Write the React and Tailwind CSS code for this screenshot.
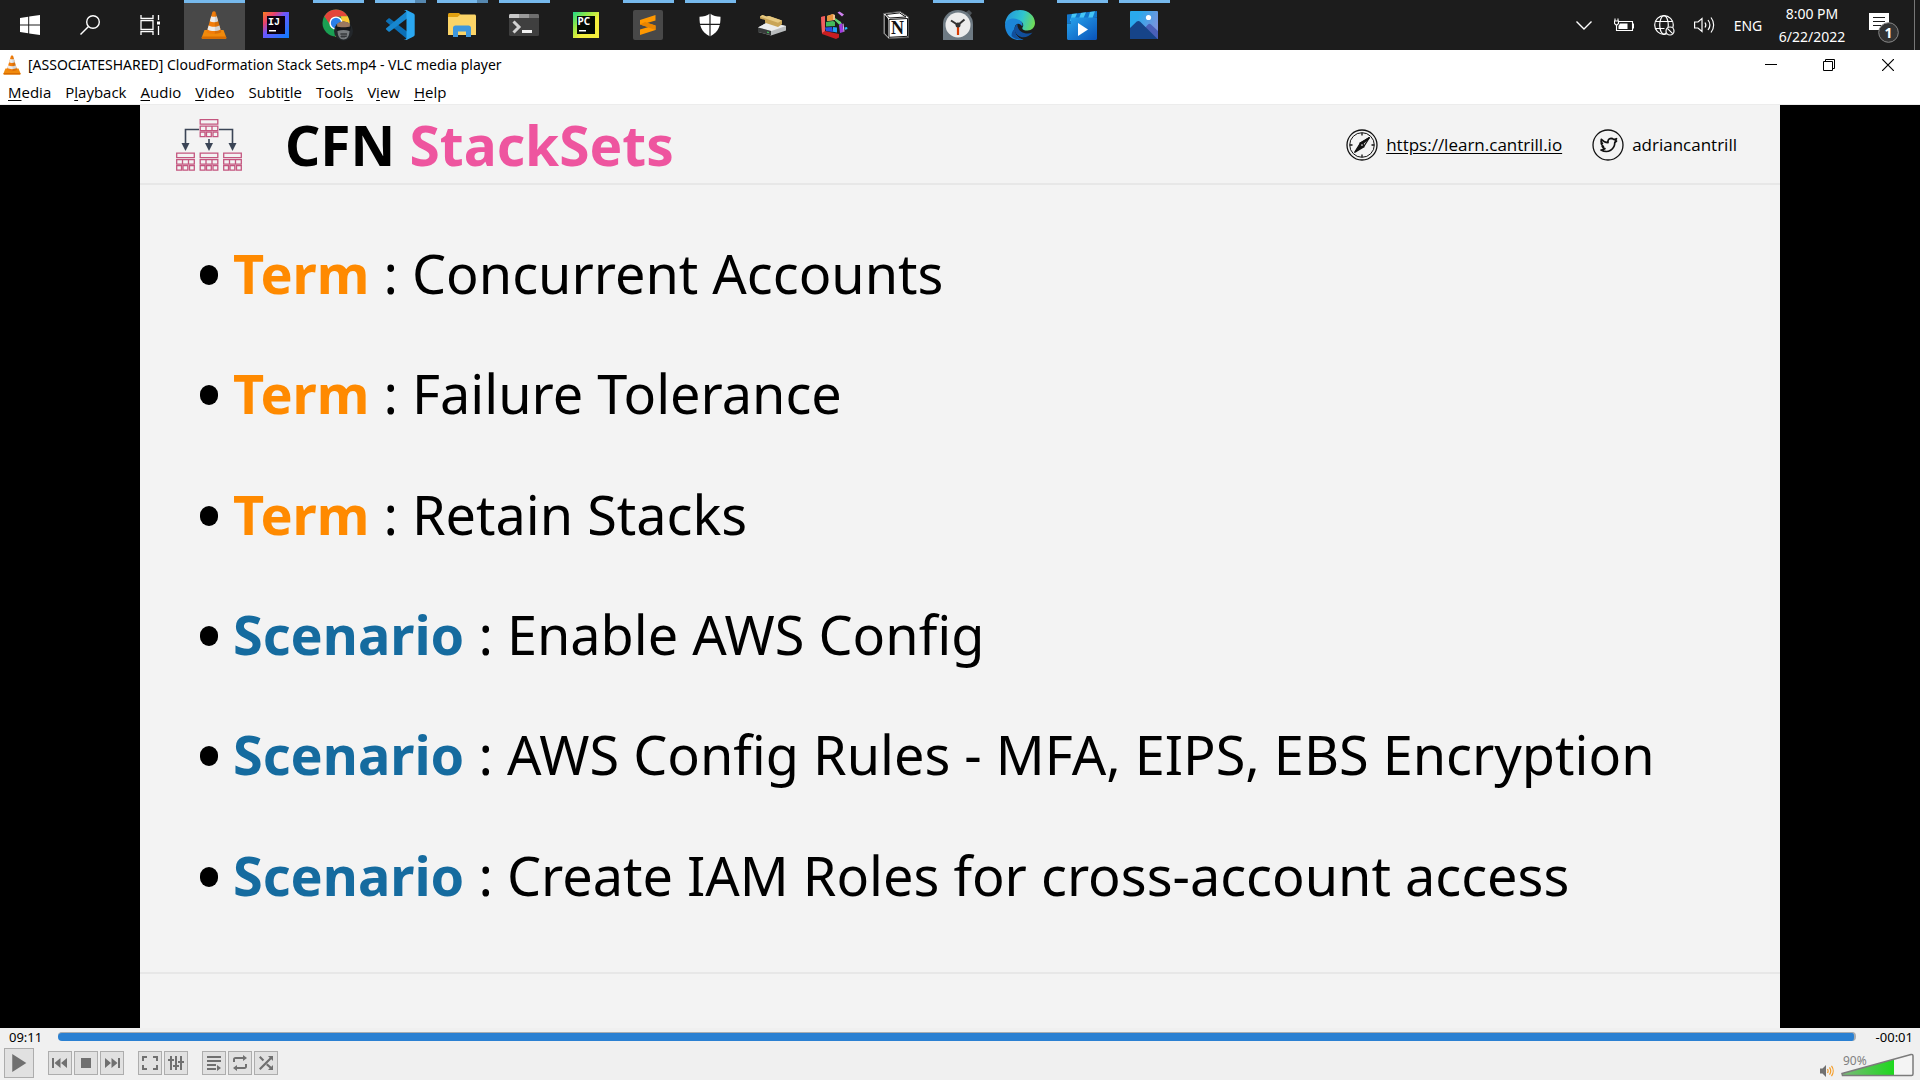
import React from "react";

function Cone({ className }) {
  return (
    <svg viewBox="0 0 26 28" className={className} aria-hidden="true">
      <path d="M3.5 19h19l2.8 7.4c.2.8-.2 1.4-1 1.4H1.7c-.8 0-1.2-.6-1-1.4z" fill="#f08a0c" />
      <path d="M1 25.5h24l.3 1.2c0 .7-.4 1.1-1 1.1H1.7c-.6 0-1-.4-1-1.1z" fill="#d96c00" />
      <path d="M11.4.9c.7-.8 2.5-.8 3.2 0L20.3 21c-2.5 2.6-12.1 2.6-14.6 0z" fill="#f27d0a" />
      <path d="M10.2 5.2c1.6.8 4 .8 5.6 0l1.4 5c-2.3 1.3-6.1 1.3-8.4 0z" fill="#ececec" />
      <path d="M7.6 14.4c2.8 1.7 8 1.7 10.8 0l1.1 4c-3 2.2-10 2.2-13 0z" fill="#ececec" />
      <path d="M13.8 1v21.8c3-.1 5.500-.8 6.500-1.800L14.600 1z" fill="#000" opacity=".1" />
    </svg>
  );
}

const jb = "bold 10px 'Liberation Mono', monospace";

const Windows = () => (
  <svg viewBox="0 0 20 20" className="size-5" fill="#fff" aria-hidden="true">
    <path d="M0 3l8.200-1.200V9.500H0zM9.200 1.600L20 0v9.500H9.200zM0 10.500h8.200v7.700L0 17zM9.200 10.500H20V20L9.200 18.400z" />
  </svg>
);
const Search = () => (
  <svg viewBox="0 0 20 20" className="size-5" fill="none" stroke="#fff" strokeWidth="1.400" aria-hidden="true">
    <circle cx="13" cy="7" r="6.300" />
    <path d="M8.500 11.500L.5 19.500" />
  </svg>
);
const TaskView = () => (
  <svg viewBox="0 0 21 20" className="h-5 w-[21px]" fill="none" stroke="#fff" strokeWidth="1.300" aria-hidden="true">
    <path d="M1 0v3.500h12V0M1 20v-3.500h12V20M1 5.700h12v8.600H1zM18.500 0v5M18.500 20v-9" />
    <path d="M17 6.500h3v3h-3z" fill="#fff" stroke="none" />
  </svg>
);
const IntelliJ = () => (
  <svg viewBox="0 0 26 26" className="size-[26px]" aria-hidden="true">
    <defs>
      <linearGradient id="ij" x1="0" y1="0" x2="1" y2="1">
        <stop offset="0" stopColor="#fc801d" />
        <stop offset=".25" stopColor="#e8416f" />
        <stop offset=".45" stopColor="#6b57ff" />
        <stop offset="1" stopColor="#087cfa" />
      </linearGradient>
    </defs>
    <path d="M0 0h26v26H0z" fill="url(#ij)" />
    <path d="M4 4h18v18H4z" fill="#0b0010" />
    <text x="5" y="13" fill="#fff" style={{ font: jb }}>IJ</text>
    <path d="M6 18h7v1.500H6z" fill="#fff" />
  </svg>
);
const Chrome = () => (
  <svg viewBox="0 0 32 32" className="size-8" aria-hidden="true">
    <circle cx="14" cy="14" r="13.500" fill="#1a9f53" />
    <path d="M2.300 7.300A13.500 13.500 0 0 1 25.700 7.300L14 7.800 9 17z" fill="#e2453a" />
    <path d="M25.700 7.300A13.500 13.500 0 0 1 13 27.500L20 16l-1-8.700z" fill="#fcc934" />
    <circle cx="14" cy="14" r="6.600" fill="#fff" />
    <circle cx="14" cy="14" r="5.200" fill="#2a80ea" />
    <circle cx="21.500" cy="22" r="9.500" fill="#23272b" />
    <path d="M15 15c2-3.500 11-3.500 13 0l-.6 6H15.600z" fill="#9a7860" />
    <path d="M14 17.500c4 1 11 1 15 0l-1 4.500H15z" fill="#15181b" />
    <path d="M15.500 22c4-1.500 8-1.500 12 0 0 5-2.500 8.500-6 8.500s-6-3.500-6-8.500z" fill="#777b7e" />
    <path d="M18 25h7M18.500 27.500h6M20 24v5M22 24v5M24 24v4" stroke="#2c2f31" strokeWidth=".8" />
  </svg>
);
const VSCode = () => (
  <svg viewBox="0 0 30 30" className="size-[30px]" aria-hidden="true">
    <path d="M1.200 10.500l2.200-2c.5-.4 1-.4 1.500 0L22 21.500v7.500L1.200 11.800c-.5-.4-.5-.9 0-1.300z" fill="#0b6fb5" />
    <path d="M1.200 19.500l2.200 2c.5.400 1 .4 1.500 0L22 8.500V1L1.200 18.200c-.5.400-.5.900 0 1.300z" fill="#1787cf" />
    <path d="M22 .3l6.500 3.200c.8.400 1.200 1 1.200 1.800v19.400c0 .8-.4 1.400-1.200 1.800L22 29.700c-1.200.5-2.500 0-3-.7 1.200.8 2.500.2 2.500-1.200V2.200c0-1.400-1.300-2-2.500-1.200.5-.7 1.800-1.200 3-.7z" fill="#2aa7f0" />
  </svg>
);
const Explorer = () => (
  <svg viewBox="0 0 28 24" className="h-6 w-7" aria-hidden="true">
    <path d="M0 1.500C0 .6.600 0 1.500 0H11l3 3v4H0z" fill="#e0a010" />
    <path d="M9.500 4L12.500 1.500h14c.9 0 1.500.6 1.500 1.500v19H0V4z" fill="#fbd467" />
    <path d="M5 24V15c0-1.500 1-2.500 2.500-2.500h13c1.500 0 2.500 1 2.500 2.500v9h-5v-5.500h-8V24z" fill="#3e97dd" />
  </svg>
);
const Terminal = () => (
  <svg viewBox="0 0 30 22" className="h-[22px] w-[30px]" aria-hidden="true">
    <rect width="30" height="22" rx="1.500" fill="#3f3f3f" />
    <path d="M0 4V1.500C0 .6.600 0 1.500 0H10v4z" fill="#c8c8c8" />
    <path d="M10 0h10v4H10z" fill="#9a9a9a" />
    <path d="M20 0h8.500c.9 0 1.500.6 1.500 1.500V4H20z" fill="#6e6e6e" />
    <path d="M4.500 7.500L10 13l-5.500 5.500" stroke="#d2d2d2" strokeWidth="3" fill="none" />
    <path d="M13 16h10v3H13z" fill="#f0f0f0" />
  </svg>
);
const PyCharm = () => (
  <svg viewBox="0 0 26 26" className="size-[26px]" aria-hidden="true">
    <defs>
      <linearGradient id="pc" x1="0" y1="0" x2=".6" y2=".6">
        <stop offset="0" stopColor="#21d789" />
        <stop offset=".5" stopColor="#8de848" />
        <stop offset="1" stopColor="#f3ee3c" />
      </linearGradient>
    </defs>
    <path d="M0 0h26v26H0z" fill="url(#pc)" />
    <path d="M4 4h18v18H4z" fill="#030a03" />
    <text x="4.500" y="13" fill="#fff" style={{ font: "bold 10px 'Noto Sans', sans-serif" }}>PC</text>
    <path d="M6 18h7v1.500H6z" fill="#fff" />
  </svg>
);
const Sublime = () => (
  <svg viewBox="0 0 30 30" className="size-[30px]" aria-hidden="true">
    <rect width="30" height="30" rx="2" fill="#484848" />
    <path d="M22.500 5v5.500L14 13l8.500 2.500V20L7 25v-5.500L15.500 17 7 14.500V10z" fill="#ff9800" />
    <path d="M7 14.500l15.500 5.500v-4.500L12 12z" fill="#e88400" />
  </svg>
);
const Shield = () => (
  <svg viewBox="0 0 22 24" className="h-6 w-[22px]" aria-hidden="true">
    <path d="M11 .5c3 2.300 6.500 3.300 10.500 3.300 0 8-1 15-10.500 19.700C1.500 18.800.5 11.800.5 3.800 4.500 3.800 8 2.800 11 .5z" fill="#fff" />
    <path d="M11 0v24M0 11.300h22" stroke="#1c1c1c" strokeWidth="1.200" />
  </svg>
);
const Drive = () => (
  <svg viewBox="0 0 28 22" className="h-[22px] w-7" aria-hidden="true">
    <path d="M0 13.500L10 8l18 4v4.500L13 21.500 0 18z" fill="#b9bcbd" />
    <path d="M0 13.500L10 8l18 4-14.500 5z" fill="#eceded" />
    <path d="M0 13.500l13 3.500v4.300L0 18z" fill="#383b3b" />
    <path d="M9 17.500l2 .5v1.200l-2-.5z" fill="#3ec45a" />
    <path d="M2 2.500L4.500 1l4 1.500L11 2l13 4.500v3.800L20 13 7 8.800V6L2 4.500z" fill="#c9a557" />
    <path d="M2 2.500L4.500 1l4 1.500L11 2l13 4.500-4 2.300z" fill="#e6c982" />
  </svg>
);
const Defrag = () => (
  <svg viewBox="0 0 28 28" className="size-7" aria-hidden="true">
    <path d="M1 6l4-1v15l14 3v3.500l-3 1.500L2 23z" fill="#c81e22" />
    <path d="M1 6l4-1v15l-3 2z" fill="#f06060" />
    <path d="M7 5l6-2 2 1v5l-8 1z" fill="#f1c08a" />
    <path d="M7 5l6-2v6l-6 1z" fill="#e8953c" />
    <path d="M6 11l7-1 2 1v4l-9 .5z" fill="#43bb5c" />
    <path d="M5 16.500l7-.5 1 5-7-1z" fill="#264ee0" />
    <path d="M13 16l4 .5v5l-4-.8z" fill="#23a3f5" />
    <path d="M15 7l6 4 1 3-3-.5-4-4z" fill="#62d472" />
    <path d="M17.500 1.500l2-1 4.500 3-2 2z" fill="#cf82f0" />
    <path d="M19 14l3-2 1.500 9-3.500 1z" fill="#a13ae0" />
    <path d="M22.500 13l1 8 1-.5-1-8z" fill="#e0b0f5" />
    <path d="M24.500 16.500l2.500-.5.5 2-2.500.8z" fill="#28bfff" />
  </svg>
);
const Notion = () => (
  <svg viewBox="0 0 28 30" className="h-[30px] w-7" aria-hidden="true">
    <path d="M1.500 3.500L18 1.500 26.500 7v20.500L6.500 28.500 1.500 23z" fill="#fff" stroke="#555" />
    <path d="M2.500 4.500L6 8.500v18.500l-3.500-4z" fill="#111" />
    <path d="M7 9.500l18.500-1v17.800L7 27.300z" fill="#fff" stroke="#111" />
    <path d="M4 4.500l13.500-1.600L24 7 7.500 8z" fill="#fff" stroke="#111" />
    <text x="9" y="23.500" fill="#111" style={{ font: "bold 18px 'Liberation Serif', serif" }}>N</text>
  </svg>
);
const Clock = () => (
  <svg viewBox="0 0 30 30" className="size-[30px]" aria-hidden="true">
    <path d="M23 2l3-2 3 3-3 4z" fill="#4d5358" />
    <path d="M0 30V14a15 14 0 0 1 30 0v16z" fill="#6e7a83" />
    <circle cx="15" cy="15" r="12.500" fill="#ececec" />
    <path d="M8 10.500l7 4.500 6.500-5.500" stroke="#333" strokeWidth="2" fill="none" />
    <path d="M15 17v8" stroke="#d83b01" strokeWidth="2.200" />
    <circle cx="15" cy="15" r="2.500" fill="#333" />
  </svg>
);
const Edge = () => (
  <svg viewBox="0 0 30 30" className="size-[30px]" aria-hidden="true">
    <defs>
      <linearGradient id="edge" x1="0" y1=".4" x2="1" y2=".6">
        <stop offset="0" stopColor="#2497df" />
        <stop offset=".55" stopColor="#2fc5cf" />
        <stop offset="1" stopColor="#71dc52" />
      </linearGradient>
    </defs>
    <path d="M0 15C0 6.500 6.500 0 15 0s15 6 15 13c0 4.500-3.500 7.500-7.500 7.500-3.500 0-6-1.500-5-3 1.500-2 1-6-4-7C7 9.500 1 11 0 15z" fill="url(#edge)" />
    <path d="M0 15C1 9 7.500 7.300 13 9.500c4 1.500 5.200 4.500 4.200 7C14 11.500 9 14 9.500 20c.4 5 4.500 9.300 9 9.500C8 32.500 0 24.500 0 15z" fill="#1c86d8" />
    <path d="M12.500 13.500c-3.500 3-4.500 8 .5 12 4.500 3.500 11 1.500 14.500-3-3 1.500-8 1.500-11.500-1-2.500-2-4-5-3.500-8zM9.500 19c0 5 4 10.500 9 10.500-4 1-9-.5-12-3.500 0-3 1-5.500 3-7z" fill="#114f9c" />
  </svg>
);
const Movies = () => (
  <svg viewBox="0 0 30 30" className="size-[30px]" aria-hidden="true">
    <defs>
      <linearGradient id="mov" x1="0" y1="0" x2="1" y2="1">
        <stop offset="0" stopColor="#27a6ee" />
        <stop offset="1" stopColor="#0a52b8" />
      </linearGradient>
    </defs>
    <path d="M0 4.500L30 1v6.500L4 11v2.500H0z" fill="#1277cc" />
    <path d="M5 4l5-.6L7 10.500 3 11zM14 3l5-.7-3 7-4.500.6zM23 2l5-.7L25.500 8l-4.500.5z" fill="#44c6f6" />
    <path d="M0 13.500h4V7.500h26v21c0 .9-.6 1.500-1.500 1.500h-27C.6 30 0 29.400 0 28.500z" fill="url(#mov)" />
    <path d="M11 13l10 6.500L11 26z" fill="#fff" />
  </svg>
);
const Photos = () => (
  <svg viewBox="0 0 28 28" className="size-7" aria-hidden="true">
    <defs>
      <linearGradient id="pho" x1="0" y1="0" x2="1" y2=".5">
        <stop offset=".3" stopColor="#2aa9ec" />
        <stop offset="1" stopColor="#7b93dd" />
      </linearGradient>
    </defs>
    <rect width="28" height="28" rx="1" fill="url(#pho)" />
    <path d="M14 18l4-4.500c1-1 2-1 3 0L28 20v8H14z" fill="#4a60b8" />
    <path d="M0 17l6.500-6.300c1.200-1 2.500-1 3.700 0L27.500 28H0z" fill="#164488" />
    <circle cx="18.500" cy="6.500" r="2.600" fill="#fff" />
  </svg>
);

const apps = [
  { name: "VLC media player", Icon: () => <Cone className="h-7 w-[26px]" />, state: "active" },
  { name: "IntelliJ IDEA", Icon: IntelliJ },
  { name: "Google Chrome", Icon: Chrome, state: "open" },
  { name: "Visual Studio Code", Icon: VSCode, state: "multi" },
  { name: "File Explorer", Icon: Explorer, state: "multi" },
  { name: "Terminal", Icon: Terminal, state: "open" },
  { name: "PyCharm", Icon: PyCharm },
  { name: "Sublime Text", Icon: Sublime, state: "open" },
  { name: "Windows Security", Icon: Shield, state: "open" },
  { name: "Drive cleanup", Icon: Drive },
  { name: "Defragmenter", Icon: Defrag },
  { name: "Notion", Icon: Notion },
  { name: "Alarms & Clock", Icon: Clock, state: "open" },
  { name: "Microsoft Edge", Icon: Edge },
  { name: "Movies & TV", Icon: Movies, state: "open" },
  { name: "Photos", Icon: Photos, state: "open" },
];

function AppButton({ name, Icon, state }) {
  const active = state === "active";
  return (
    <button aria-label={name} className={`relative flex h-full w-[61px] items-center justify-center pr-0.5 ${active ? "bg-[#484848]" : ""}`}>
      {active && <span className="absolute inset-x-0 top-0 h-[3px] bg-[#76b9ed]" />}
      {state === "open" && <span className="absolute inset-x-[5px] top-0 h-[3px] bg-[#76b9ed]" />}
      {state === "multi" && (
        <span className="absolute inset-x-[5px] top-0 flex h-[3px]">
          <span className="flex-1 bg-[#76b9ed]" />
          <span className="w-[11px] bg-[#5688b0]" />
        </span>
      )}
      <Icon />
    </button>
  );
}

function Taskbar() {
  return (
    <header className="flex h-[50px] shrink-0 items-stretch justify-between bg-[#1c1c1c] text-white">
      <nav className="flex items-stretch">
        <button aria-label="Start" className="flex w-[60px] items-center justify-center"><Windows /></button>
        <button aria-label="Search" className="flex w-[60px] items-center justify-center"><Search /></button>
        <button aria-label="Task View" className="mr-1 flex w-[60px] items-center justify-center"><TaskView /></button>
        <div className="flex items-stretch gap-px">
          {apps.map((a) => <AppButton key={a.name} {...a} />)}
        </div>
      </nav>
      <div className="flex items-stretch">
        <button aria-label="Show hidden icons" className="flex w-10 items-center justify-center">
          <svg viewBox="0 0 16 9" className="h-[9px] w-4" fill="none" stroke="#fff" strokeWidth="1.400"><path d="M.5.500L8 8 15.500.500" /></svg>
        </button>
        <button aria-label="Battery" className="flex w-10 items-center justify-center">
          <svg viewBox="0 0 20 14" className="h-3.5 w-5" fill="none" stroke="#fff" strokeWidth="1.100">
            <path d="M5 3.500h13.500v9H2.500V8M18.500 6h1v4h-1M1 .5V3M4 .5V3M.5 3h4v2.500L2.500 7.500l-2-2z" />
            <path d="M6 5.500h7.500v5.500H4.500V8z" fill="#fff" stroke="none" />
          </svg>
        </button>
        <button aria-label="Network" className="flex w-10 items-center justify-center">
          <svg viewBox="0 0 21 21" className="size-[21px]" fill="none" stroke="#fff" strokeWidth="1.200">
            <circle cx="10" cy="10" r="9.300" />
            <ellipse cx="10" cy="10" rx="4.300" ry="9.300" />
            <path d="M1.500 6.500h17M1.500 13.500h9" />
            <circle cx="16" cy="16" r="4" fill="#1c1c1c" />
            <path d="M13.300 13.300l5.400 5.400" />
          </svg>
        </button>
        <button aria-label="Volume" className="flex w-10 items-center justify-center">
          <svg viewBox="0 0 21 18" className="h-[18px] w-[21px]" fill="none" stroke="#fff" strokeWidth="1.200">
            <path d="M.6 6v6H4l4 3.500v-13L4 6zM11 6.500c1 1.500 1 3.500 0 5M14 4c2.300 3 2.300 7 0 10M17 1.500c3.500 4.500 3.500 10.500 0 15" />
          </svg>
        </button>
        <button className="flex w-12 items-center justify-center text-[14px]">ENG</button>
        <button className="flex w-20 flex-col items-center justify-center text-[14px] leading-[23px]">
          <span>8:00 PM</span>
          <span>6/22/2022</span>
        </button>
        <button aria-label="Notifications" className="mr-[5px] flex w-[63px] items-center border-r border-[#777] pl-[17px]">
          <svg viewBox="0 0 30 32" className="mt-1 h-8 w-[30px]">
            <path d="M0 2h20v17h-6l-4 4v-4H0z" fill="#fff" />
            <path d="M4 6.500h12M4 10.500h12M4 14.500h8" stroke="#1c1c1c" />
            <circle cx="19.500" cy="21.500" r="9.800" fill="#333" stroke="#888" />
            <text x="15.500" y="26.500" fill="#fff" style={{ font: "bold 14px 'Noto Sans', sans-serif" }}>1</text>
          </svg>
        </button>
      </div>
    </header>
  );
}

const menus = [
  ["", "M", "edia"],
  ["P", "l", "ayback"],
  ["", "A", "udio"],
  ["", "V", "ideo"],
  ["Subti", "t", "le"],
  ["Tool", "s", ""],
  ["V", "i", "ew"],
  ["", "H", "elp"],
];

function TitleBar() {
  return (
    <div className="flex h-[30px] shrink-0 items-center justify-between bg-white text-black">
      <div className="flex items-center gap-[7px] pl-[3px]">
        <Cone className="h-5 w-[18px]" />
        <h1 className="text-[14px] leading-5 whitespace-nowrap">[ASSOCIATESHARED] CloudFormation Stack Sets.mp4 - VLC media player</h1>
      </div>
      <div className="mr-[3px] flex h-full items-center">
        <button aria-label="Minimize" className="flex h-full w-[58px] items-center justify-center">
          <svg viewBox="0 0 12 12" className="size-3" stroke="#000"><path d="M0 5.500h12" /></svg>
        </button>
        <button aria-label="Restore" className="flex h-full w-[58px] items-center justify-center">
          <svg viewBox="0 0 12 12" className="size-3" fill="none" stroke="#000"><path d="M.5 2.500h9v9h-9zM2.500 2.500v-2h9v9h-2" /></svg>
        </button>
        <button aria-label="Close" className="flex h-full w-[59px] items-center justify-center">
          <svg viewBox="0 0 12 12" className="size-3" stroke="#000" strokeWidth="1.200"><path d="M0 0l12 12M12 0L0 12" /></svg>
        </button>
      </div>
    </div>
  );
}

function MenuBar() {
  return (
    <nav className="flex h-[25px] shrink-0 items-center border-b border-[#ececec] bg-white pl-px font-['Open_Sans',sans-serif] text-[15px] text-black">
      {menus.map(([pre, key, post]) => (
        <button key={pre + key + post} className="px-[7px] leading-6">
          {pre}<span className="underline underline-offset-2">{key}</span>{post}
        </button>
      ))}
    </nav>
  );
}

function StackIcon() {
  const box = (x, y) => (
    <g key={`${x}-${y}`} transform={`translate(${x} ${y})`} fill="none" stroke="#c4567f" strokeWidth="1.300">
      <path d="M.7.700h17.600v4.500H.7zM.7 7.200h17.600v4.500H.7zM6.500 7.200v4.500M12.500 7.200v4.500M.7 13.200h4.800v4.500H.7zM7 13.200h4.800v4.500H7zM13.500 13.200h4.800v4.500h-4.800z" />
    </g>
  );
  return (
    <svg viewBox="0 0 66 53" className="h-[53px] w-[66px]" aria-hidden="true">
      {box(23.500, 0)}
      {box(0, 33.500)}
      {box(23.500, 33.500)}
      {box(47, 33.500)}
      <path d="M23 10.500H9.500V26M43 10.500h13.500V26M33 20v6" fill="none" stroke="#3b4556" strokeWidth="1.600" />
      <path d="M5.500 24h8l-4 8zM29 24h8l-4 8zM52.500 24h8l-4 8z" fill="#3b4556" />
    </svg>
  );
}

function Compass() {
  return (
    <svg viewBox="0 0 32 32" className="size-8" fill="none" stroke="#111" strokeWidth="1.300" aria-hidden="true">
      <circle cx="16" cy="16" r="15" />
      <circle cx="16" cy="16" r="12.300" strokeWidth="1" />
      <path d="M16 4v2.500M16 25.500V28M4 16h2.500M25.500 16H28" />
      <path d="M23.500 8.500l-5.700 9-3.500-3.300z" />
      <path d="M8.500 23.500l5.700-9 3.500 3.300z" fill="#111" />
      <path d="M23.500 8.500l-9.200 5.700 1.500 1.500z" fill="#111" />
      <circle cx="16" cy="16" r="1.500" fill="#f3f3f3" />
    </svg>
  );
}

function Bird() {
  return (
    <svg viewBox="0 0 32 32" className="size-8" fill="none" stroke="#111" strokeWidth="1.300" aria-hidden="true">
      <circle cx="16" cy="16" r="15" />
      <path d="M9.300 10.300c2 2.300 4 3.300 6.700 3.400-.4-2.700 1-4.200 3-4.300 1.200 0 2 .4 2.700 1.100l2.800-.8-1.200 2.100 1.200.2-1.700 1.500c0 6.500-6.500 11.500-13.800 7.500 2 0 3-.4 4-1.300-1.500-.3-2.300-1-2.800-2.200h1.200c-1.500-.9-2.100-2-2.200-3.300l1.200.3c-1.300-1.300-1.700-2.700-1.100-4.200z" strokeWidth="1.700" strokeLinejoin="round" />
    </svg>
  );
}

const points = [
  ["Term", "Concurrent Accounts"],
  ["Term", "Failure Tolerance"],
  ["Term", "Retain Stacks"],
  ["Scenario", "Enable AWS Config"],
  ["Scenario", "AWS Config Rules - MFA, EIPS, EBS Encryption"],
  ["Scenario", "Create IAM Roles for cross-account access"],
];

function Slide() {
  return (
    <main className="flex flex-1 bg-black px-[140px]">
      <article className="flex flex-1 flex-col bg-[#f3f3f3] text-black">
        <div className="flex h-20 items-center justify-between border-b-2 border-[#e7e7e7] pt-0.5 pr-[43px] pl-9">
          <div className="flex items-center gap-[43px]">
            <StackIcon />
            <h2 className="pb-0.5 text-[55px] leading-none font-bold whitespace-nowrap">CFN <span className="text-[#ee559f]">StackSets</span></h2>
          </div>
          <div className="flex items-center font-['Open_Sans',sans-serif] text-[17px]">
            <Compass />
            <a href="https://learn.cantrill.io" className="ml-2 underline underline-offset-2">https://learn.cantrill.io</a>
            <span className="ml-[30px] flex items-center gap-2"><Bird />adriancantrill</span>
          </div>
        </div>
        <ul className="flex flex-1 flex-col pt-7 pb-[37px] pl-[60px]">
          {points.map(([kind, text]) => (
            <li key={text} className="flex flex-1 items-center text-[54px] leading-none whitespace-nowrap">
              <span className="mt-1 mr-[15px] h-5 w-[18px] rounded-full bg-black" />
              <span>
                <b className={kind === "Term" ? "text-[#ff8a00]" : "text-[#156b9f]"}>{kind}</b> : {text}
              </span>
            </li>
          ))}
        </ul>
        <div className="h-14 border-t-2 border-[#e7e7e7]" />
      </article>
    </main>
  );
}

function Ctl({ label, children, big }) {
  return (
    <button aria-label={label} className={`flex items-center justify-center border border-[#adadad] bg-[#e1e1e1] ${big ? "size-[30px]" : "size-6"}`}>
      <svg viewBox="0 0 16 16" className={big ? "size-[18px]" : "size-4"} fill="#707070" stroke="none">{children}</svg>
    </button>
  );
}

function Player() {
  return (
    <footer className="flex h-[52px] shrink-0 flex-col bg-[#f0f0f0]">
      <div className="flex h-[17px] items-center text-[13px] text-black">
        <span className="w-[58px] pt-0.5 pl-[9px]">09:11</span>
        <input type="range" aria-label="Position" min="0" max="552" defaultValue="551" className="h-[9px] flex-1 appearance-none rounded border-t border-r-2 border-[#a9adb1] bg-[#2a80d2] [&::-webkit-slider-thumb]:appearance-none" />
        <span className="w-16 pt-0.5 pr-[7px] text-right">-00:01</span>
      </div>
      <div className="flex flex-1 items-center justify-between px-1 pt-px">
        <div className="flex items-center gap-3.5">
          <Ctl label="Play" big><path d="M2 0l12.500 8L2 16z" /></Ctl>
          <div className="flex gap-0.5">
            <Ctl label="Previous"><path d="M0 3h2v10H0zM2.500 8L8.500 3v10zM9 8l6-5v10z" /></Ctl>
            <Ctl label="Stop"><path d="M3 3h10v10H3z" /></Ctl>
            <Ctl label="Next"><path d="M14 3h2v10h-2zM13.500 8l-6-5v10zM7 8L1 3v10z" /></Ctl>
          </div>
          <div className="flex gap-0.5">
            <Ctl label="Fullscreen"><path d="M0 1h5v2H2v3H0zM11 1h5v5h-2V3h-3zM0 10h2v3h3v2H0zM14 10h2v5h-5v-2h3z" /></Ctl>
            <Ctl label="Extended settings"><path d="M2 1h2v3h2v2H4v9H2V6H0V4h2zM7 1h2v9h2v2H9v3H7v-3H5v-2h2zM12 1h2v5h2v2h-2v7h-2V8h-2V6h2z" /></Ctl>
          </div>
          <div className="flex gap-0.5">
            <Ctl label="Playlist"><path d="M1 1h14v2H1zM1 5h14v2H1zM1 9h9v2H1zM1 13h9v2H1zM11 10l4 3-4 3z" /></Ctl>
            <Ctl label="Loop"><path d="M1 7V4.500C1 3 2 2 3.500 2H11V0l4 3-4 3V4H3v3zM15 9v2.500c0 1.500-1 2.500-2.500 2.500H5v2l-4-3 4-3v2h8V9z" /></Ctl>
            <Ctl label="Random"><path d="M2.500 1l3.700 3.700-1.500 1.500L1 2.500zM10 1h5v5l-1.700-1.700L2.500 15 1 13.500 11.700 2.700zM9.500 8.500l3.800 3.300L15 10v5h-5l1.700-1.700L8 10z" /></Ctl>
          </div>
        </div>
        <div className="flex items-end gap-[7px] self-end pr-0.5 pb-[3px]">
          <button aria-label="Mute">
            <svg viewBox="0 0 14 12" className="h-3 w-3.5" fill="none">
              <path d="M0 3.500h2.500L6 0v12L2.500 8.500H0z" fill="#707070" />
              <path d="M7.500 4c.7 1.200.7 2.800 0 4M9.500 2.300c1.500 2.200 1.500 5.200 0 7.400M11.500.8c2.200 3 2.200 7.400 0 10.400" stroke="#f59b23" strokeWidth="1.200" />
            </svg>
          </button>
          <div className="relative">
            <svg viewBox="0 0 73 24" className="h-6 w-[73px]" aria-hidden="true">
              <defs>
                <linearGradient id="vol"><stop offset="0" stopColor="#7cb87a" /><stop offset="1" stopColor="#1ed81e" /></linearGradient>
              </defs>
              <path d="M1 20.500L70 1.500c1-.2 2 .2 2 1.500v18c0 .9-.6 1.500-1.500 1.500h-69z" fill="#f4f4f4" />
              <path d="M1 20.500L53 6.200v16.300H1z" fill="url(#vol)" />
              <path d="M1 20.500L70 1.500c1-.2 2 .2 2 1.500v18c0 .9-.6 1.500-1.500 1.500h-69z" fill="none" stroke="#7b7b7b" strokeWidth="1.500" />
              <text x="2" y="12" fill="#808080" style={{ font: "12px 'Noto Sans', sans-serif" }}>90%</text>
            </svg>
            <input type="range" aria-label="Volume" max="125" defaultValue="90" className="absolute inset-0 w-full opacity-0" />
          </div>
        </div>
      </div>
    </footer>
  );
}

export default function App() {
  return (
    <div className="flex min-h-screen flex-col bg-black font-['Noto_Sans',sans-serif]">
      <Taskbar />
      <TitleBar />
      <MenuBar />
      <Slide />
      <Player />
    </div>
  );
}
